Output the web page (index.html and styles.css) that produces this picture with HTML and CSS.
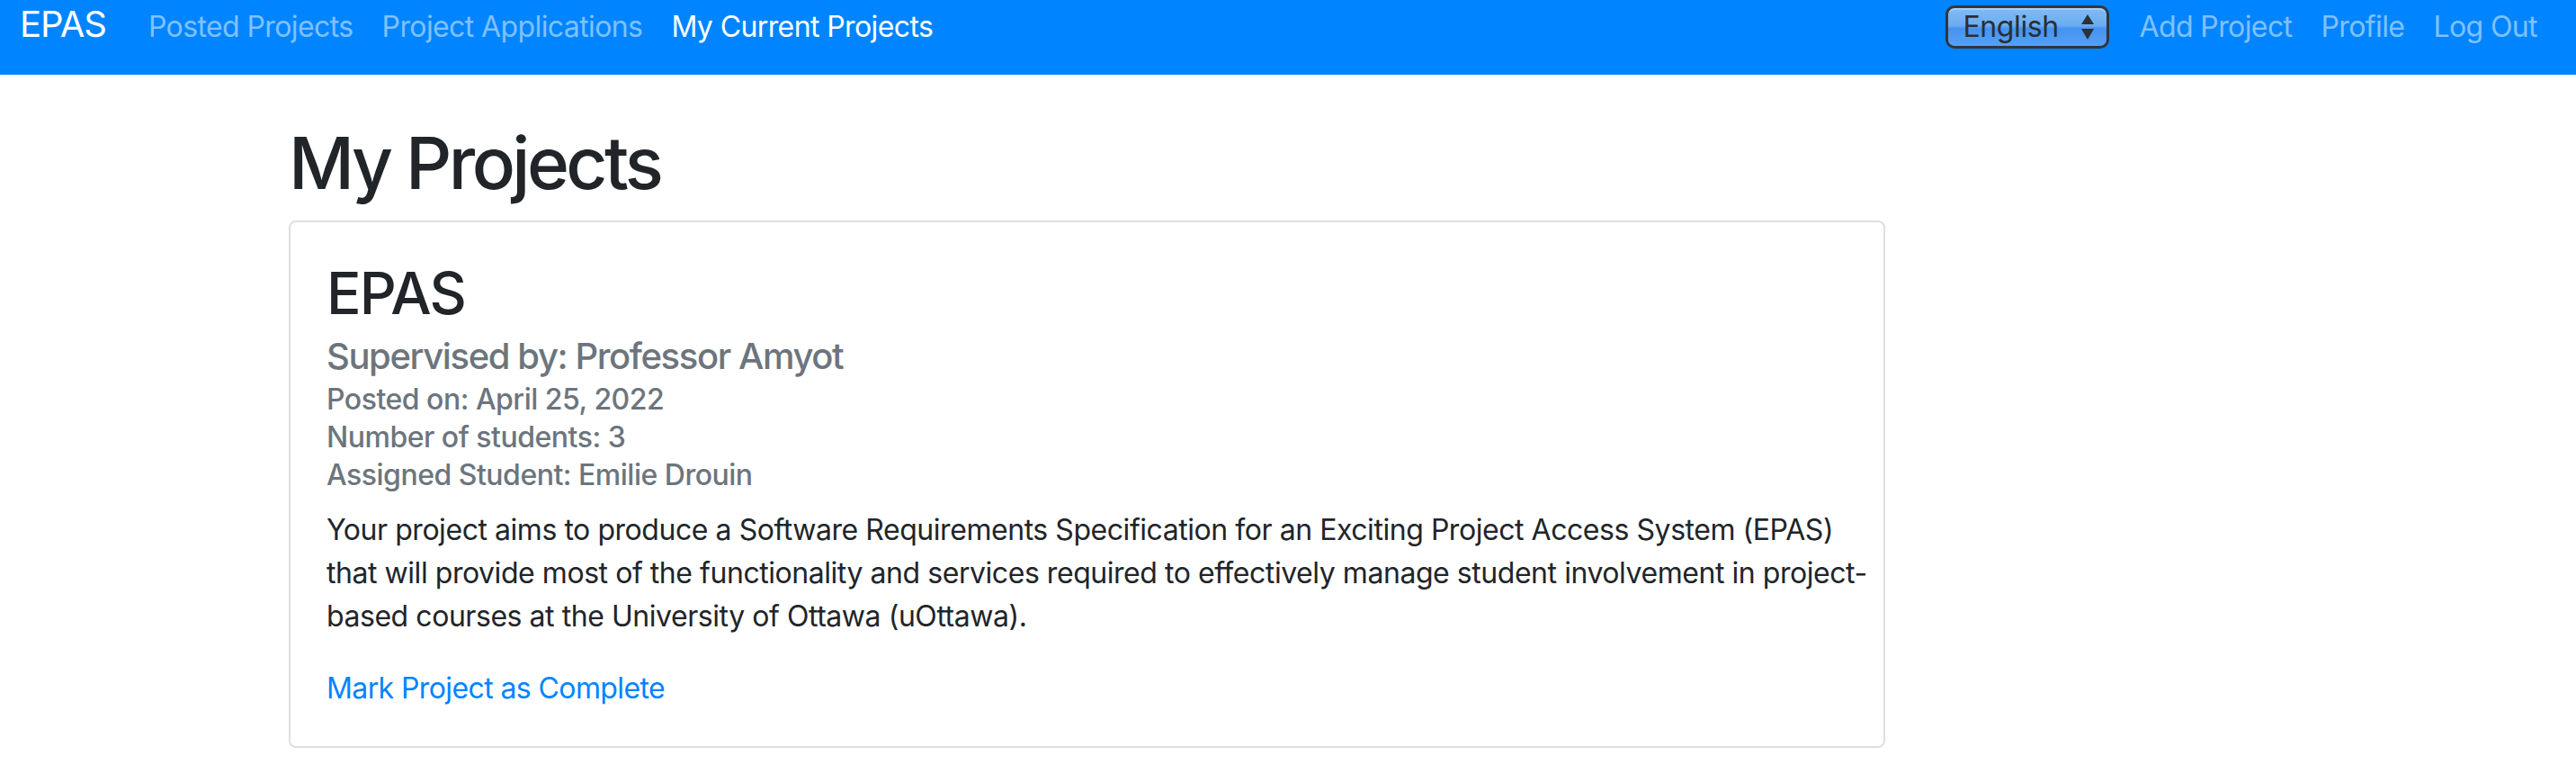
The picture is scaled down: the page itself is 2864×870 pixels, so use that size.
FILE: index.html
```html
<!DOCTYPE html>
<html lang="en">
<head>
<meta charset="utf-8">
<title>My Projects</title>
<link rel="stylesheet" href="styles.css">
</head>
<body>
<nav class="navbar">
  <a class="brand" href="#">EPAS</a>
  <ul class="nav">
    <li><a class="nav-link" href="#">Posted Projects</a></li>
    <li><a class="nav-link" href="#">Project Applications</a></li>
    <li><a class="nav-link active" href="#">My Current Projects</a></li>
  </ul>
  <ul class="nav nav-right">
    <li class="lang-item">
      <div class="lang-select">
        <span class="lang-text">English</span>
        <svg class="lang-arrows" width="16" height="30" viewBox="0 0 16 30"><path d="M8 1 L15 12 L1 12 Z" fill="#2c3037"/><path d="M1 17 L15 17 L8 29 Z" fill="#2c3037"/></svg>
      </div>
    </li>
    <li><a class="nav-link" href="#">Add Project</a></li>
    <li><a class="nav-link" href="#">Profile</a></li>
    <li><a class="nav-link" href="#">Log Out</a></li>
  </ul>
</nav>
<main class="container">
  <h1 class="page-title">My Projects</h1>
  <section class="card">
    <h2 class="card-title">EPAS</h2>
    <h5 class="card-subtitle">Supervised by: Professor Amyot</h5>
    <div class="meta-list">
      <p class="meta">Posted on: April 25, 2022</p>
      <p class="meta">Number of students: 3</p>
      <p class="meta">Assigned Student: Emilie Drouin</p>
    </div>
    <p class="desc">Your project aims to produce a Software Requirements Specification for an Exciting Project Access System (EPAS)<br>that will provide most of the functionality and services required to effectively manage student involvement in project-<br>based courses at the University of Ottawa (uOttawa).</p>
    <a class="card-link" href="#">Mark Project as Complete</a>
  </section>
</main>
</body>
</html>
```
FILE: styles.css
```css
* {
  box-sizing: border-box;
}

body {
  margin: 0;
  font-family: Inter, "Noto Sans", sans-serif;
  color: #212529;
  background: #ffffff;
}

.navbar {
  display: flex;
  align-items: baseline;
  height: 83px;
  padding: 6px 27px 0 22px;
  background: #0084ff;
}

.brand {
  font-size: 40px;
  line-height: 40px;
  letter-spacing: -1px;
  color: #ffffff;
  text-decoration: none;
  margin-right: 31px;
}

.nav {
  display: flex;
  align-items: baseline;
  list-style: none;
  margin: 0;
  padding: 0;
}

.nav-right {
  margin-left: auto;
}

.nav-link {
  display: block;
  font-size: 32px;
  line-height: 48px;
  letter-spacing: -0.6px;
  padding: 0 16px;
  color: rgba(255, 255, 255, 0.5);
  text-decoration: none;
}

.nav-link.active {
  color: #ffffff;
}

.lang-item {
  margin-right: 18px;
}

.lang-select {
  display: inline-flex;
  align-items: center;
  justify-content: space-between;
  width: 182px;
  height: 48px;
  padding: 0 13px 0 17px;
  border: 3px solid #30363e;
  border-radius: 10px;
  background: linear-gradient(#80bbf4 0%, #6badf1 46%, #4593f1 54%, #55a0f4 100%);
  box-shadow: inset 0 2px 0 rgba(255, 255, 255, 0.3);
  color: #2a2e34;
  font-size: 32px;
  line-height: 42px;
  letter-spacing: -0.4px;
}

.lang-arrows {
  display: block;
}

.container {
  width: 2282px;
  margin: 0 auto;
  padding: 0 30px;
}

.page-title {
  font-size: 80px;
  font-weight: 500;
  line-height: 96px;
  letter-spacing: -3.6px;
  margin: 50px 0 16px;
}

.card {
  width: 1775px;
  padding: 40px;
  border: 2px solid #dfdfdf;
  border-radius: 8px;
}

.card-title {
  font-size: 64px;
  font-weight: 500;
  line-height: 77px;
  letter-spacing: -1.8px;
  margin: 0 0 8px;
}

.card-subtitle {
  font-size: 40px;
  font-weight: 500;
  line-height: 48px;
  letter-spacing: -1.4px;
  color: #6c757d;
  margin: 0 0 3px;
}

.meta-list {
  margin-bottom: 16px;
}

.meta {
  font-size: 32px;
  font-weight: 500;
  line-height: 42px;
  letter-spacing: -0.5px;
  color: #6c757d;
  margin: 0;
}

.desc {
  font-size: 32px;
  line-height: 48px;
  letter-spacing: -0.45px;
  white-space: nowrap;
  margin: 0 0 32px;
}

.card-link {
  display: inline-block;
  font-size: 32px;
  line-height: 48px;
  letter-spacing: -0.6px;
  color: #0084ff;
  text-decoration: none;
}
```
